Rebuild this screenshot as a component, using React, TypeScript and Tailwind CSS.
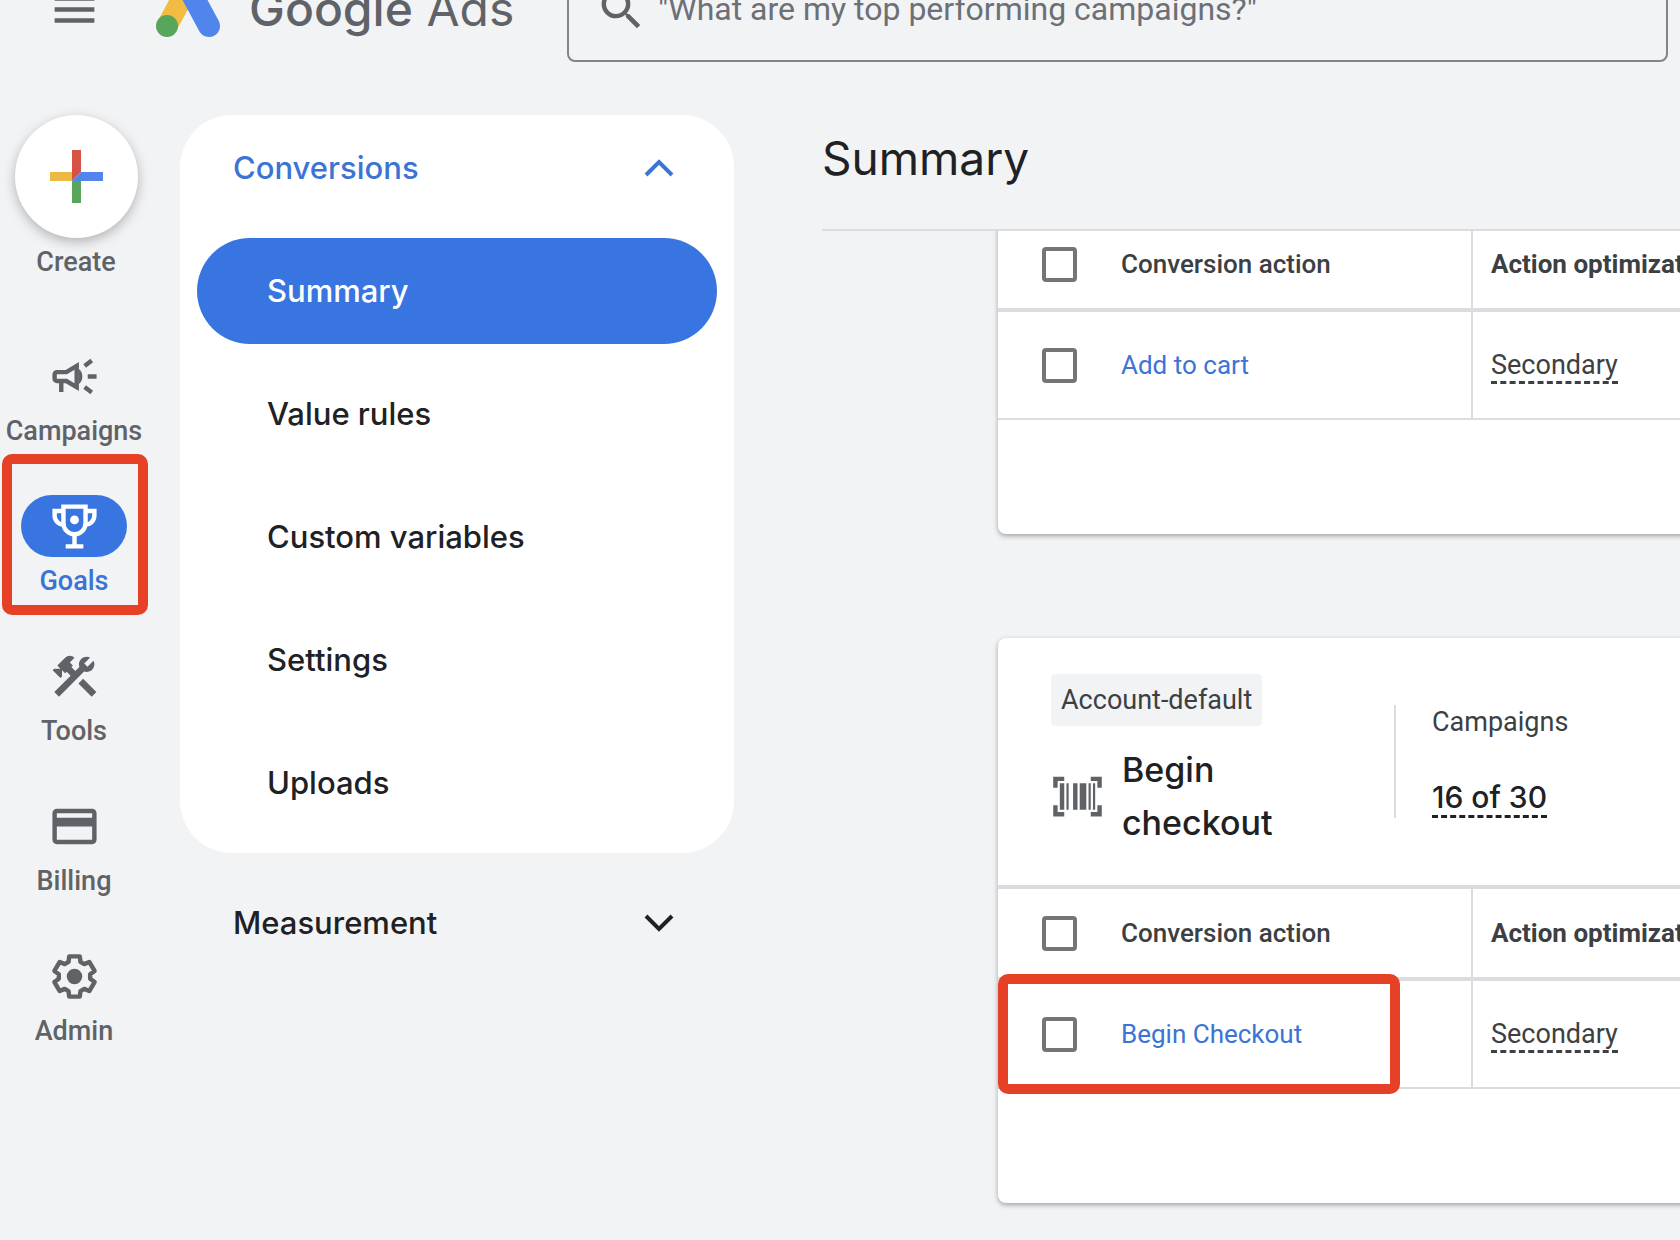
import { useState } from "react";
import type { ReactNode } from "react";
import clsx from "clsx";
import { MdConstruction, MdCreditCard, MdMenu, MdSearch } from "react-icons/md";

const AdsLogo = () => (
    <svg viewBox="0 0 66 70" className="h-[70px] w-[66px]" aria-hidden="true">
        <path d="M33 13 12 52" stroke="#f2bc42" strokeWidth="21" strokeLinecap="round" />
        <path d="M33 13 54 52" stroke="#5086ec" strokeWidth="22" strokeLinecap="round" />
        <circle cx="12" cy="52" r="11" fill="#58a55c" />
    </svg>
);

const PlusIcon = () => (
    <svg viewBox="0 0 53 53" className="size-[53px]" aria-hidden="true">
        <path d="M0 22h22v9H0z" fill="#ecb943" />
        <path d="M22 0h9v22l-9 9z" fill="#d65344" />
        <path d="M31 22h22v9H22z" fill="#5184ec" />
        <path d="M22 31h9v22h-9z" fill="#58a55c" />
    </svg>
);

const CampaignIcon = () => (
    <svg viewBox="0 0 24 24" className="size-[53px]" fill="currentColor" aria-hidden="true">
        <path d="M18 11v2h4v-2zM16 17.6l3.2 2.4 1.2-1.6-3.2-2.4zM20.4 5.6 19.2 4 16 6.4 17.2 8z" />
        <path
            fillRule="evenodd"
            d="M4 9c-1.1 0-2 .9-2 2v2c0 1.1.9 2 2 2h1v4h2v-4h1l6 3.6V5.4L8 9zm0 2h4.6L12 8.9v6.2L8.6 13H4z"
        />
        <path d="M14 8.6a4.5 4.5 0 0 1 0 6.8z" />
    </svg>
);

const TrophyIcon = () => (
    <svg viewBox="0 0 24 24" className="size-[53px]" fill="none" stroke="currentColor" strokeWidth="2" aria-hidden="true">
        <path d="M7 3v7.5a5 5 0 0 0 10 0V3z" />
        <path d="M7 5H3v2a4.2 4.2 0 0 0 4.5 4.2M17 5h4v2a4.2 4.2 0 0 1-4.5 4.2M12 15.5V21M8 21h8" />
        <circle cx="12" cy="9" r="2" fill="currentColor" stroke="none" />
    </svg>
);

const GearIcon = () => (
    <svg viewBox="0 0 24 24" className="size-[53px]" fill="none" stroke="currentColor" strokeWidth="2" strokeLinejoin="round" aria-hidden="true">
        <path d="M9.6 2.9h4.8l.3 2.5 1.7 1 2.3-1 2.4 4.1-2 1.5v2l2 1.5-2.4 4.1-2.3-1-1.7 1-.3 2.5H9.6l-.3-2.5-1.7-1-2.3 1-2.4-4.1 2-1.5v-2l-2-1.5 2.4-4.1 2.3 1 1.7-1z" />
        <circle cx="12" cy="12" r="3.5" fill="currentColor" stroke="none" />
    </svg>
);

const BarcodeIcon = () => (
    <svg viewBox="0 0 24 24" className="size-[53px] shrink-0" fill="#5f6368" aria-hidden="true">
        <path d="M1 3h5v2H3v3H1zM18 3h5v5h-2V5h-3zM1 16h2v3h3v2H1zM21 16h2v5h-5v-2h3z" />
        <path d="M4 6h2v12H4zM7 6h1v12H7zM10 6h2v12h-2zM13 6h3v12h-3zM17 6h1v12h-1zM19 6h1v12h-1z" />
    </svg>
);

const Chevron = ({ up }: { up?: boolean }) => (
    <svg viewBox="0 0 30 18" className="h-[18px] w-[30px]" fill="none" stroke="currentColor" strokeWidth="4" aria-hidden="true">
        <path d={up ? "M2 16 15 3l13 13" : "M2 2l13 13L28 2"} />
    </svg>
);

const railItems: { label: string; icon: ReactNode }[] = [
    { label: "Campaigns", icon: <CampaignIcon /> },
    { label: "Goals", icon: <TrophyIcon /> },
    { label: "Tools", icon: <MdConstruction size={53} /> },
    { label: "Billing", icon: <MdCreditCard size={53} /> },
    { label: "Admin", icon: <GearIcon /> },
];

const conversionLinks = ["Summary", "Value rules", "Custom variables", "Settings", "Uploads"];

const Header = () => (
    <header className="-mt-11 flex h-[106px] items-center pr-3">
        <button aria-label="Main menu" className="flex w-[148px] shrink-0 justify-center text-[#5f6368]">
            <MdMenu size={53} />
        </button>
        <a
            href="#"
            className="flex w-[419px] shrink-0 items-center gap-7 pl-[7px] font-['Inter'] text-[48px] whitespace-nowrap text-[#5f6368]"
        >
            <AdsLogo />
            <span>
                <span className="font-medium">Google</span> Ads
            </span>
        </a>
        <label className="flex h-full flex-1 items-center gap-[10px] rounded-lg border-2 border-[#80868b] pl-[26px] text-[#5f6368]">
            <MdSearch size={53} className="shrink-0" />
            <input
                type="search"
                aria-label="Search"
                placeholder={'"What are my top performing campaigns?"'}
                className="w-full bg-transparent text-[32px] outline-none placeholder:text-[#6c7075]"
            />
        </label>
    </header>
);

const Rail = () => {
    const [active, setActive] = useState("Goals");

    return (
        <nav className="mr-7 flex w-[152px] shrink-0 flex-col items-center text-[27px] leading-10 font-medium text-[#5f6368]">
            <button className="flex flex-col items-center gap-1">
                <span className="flex size-[123px] items-center justify-center rounded-full bg-white shadow-[0_4px_12px_rgba(60,64,67,0.35)]">
                    <PlusIcon />
                </span>
                Create
            </button>
            <div className="mt-[63px] flex w-[148px] flex-col gap-11 self-start">
                {railItems.map(({ label, icon }) => (
                    <button
                        key={label}
                        onClick={() => setActive(label)}
                        className={clsx("relative flex flex-col items-center gap-1", label === active && "text-[#3b74d4]")}
                    >
                        <span
                            className={clsx(
                                "flex h-[62px] w-[106px] items-center justify-center rounded-full",
                                label === active && "bg-[#3875e0] text-white"
                            )}
                        >
                            {icon}
                        </span>
                        {label}
                        {label === "Goals" && (
                            <span className="pointer-events-none absolute -top-[41px] right-0 -bottom-3.5 left-0.5 rounded-[10px] border-10 border-[#e64126]" />
                        )}
                    </button>
                ))}
            </div>
        </nav>
    );
};

const SideMenu = () => {
    const [current, setCurrent] = useState("Summary");

    return (
        <aside className="flex w-[554px] shrink-0 flex-col gap-[17px] font-['Inter'] text-[31px] font-medium text-[#202124]">
            <div className="flex flex-col gap-[17px] rounded-[52px] bg-white px-[17px] pb-[17px]">
                <button className="flex h-[106px] items-center justify-between pr-[43px] pl-9 text-[#3b74d4]">
                    Conversions
                    <Chevron up />
                </button>
                {conversionLinks.map((name) => (
                    <a
                        key={name}
                        href="#"
                        onClick={() => setCurrent(name)}
                        className={clsx(
                            "flex h-[106px] items-center rounded-full pl-[70px]",
                            name === current && "bg-[#3875e0] text-white"
                        )}
                    >
                        {name}
                    </a>
                ))}
            </div>
            <button className="mx-[17px] flex h-[106px] items-center justify-between pr-[43px] pl-9">
                Measurement
                <Chevron />
            </button>
        </aside>
    );
};

const Checkbox = ({ id, label }: { id: string; label?: string }) => (
    <input
        id={id}
        type="checkbox"
        aria-label={label}
        className="size-[35px] shrink-0 appearance-none rounded-[4px] border-4 border-[#757575] bg-white checked:bg-[#3875e0]"
    />
);

const ActionTable = ({ id, action, marked }: { id: string; action: string; marked?: boolean }) => (
    <table className="mb-[114px] w-full table-fixed border-separate border-spacing-0 text-left text-[26px] text-[#3c4043]">
        <thead>
            <tr className="h-[92px]">
                <th className="w-[473px] border-b-4 border-[#dadce0] p-0 font-medium">
                    <div className="flex items-center gap-11 pl-11">
                        <Checkbox id={`${id}-all`} />
                        <label htmlFor={`${id}-all`}>Conversion action</label>
                    </div>
                </th>
                <th className="border-b-4 border-l-2 border-[#dadce0] p-0 pl-[18px] font-bold whitespace-nowrap">
                    Action optimization
                </th>
            </tr>
        </thead>
        <tbody>
            <tr className="h-[108px]">
                <td className="relative border-b-2 border-[#dadce0] p-0">
                    <div className="flex items-center gap-11 pl-11">
                        <Checkbox id={`${id}-row`} label={action} />
                        <a href="#" className="text-[#3b74d4]">
                            {action}
                        </a>
                    </div>
                    {marked && (
                        <span className="pointer-events-none absolute -top-[7px] -bottom-[7px] left-0 w-[402px] rounded-[10px] border-10 border-[#e64126]" />
                    )}
                </td>
                <td className="border-b-2 border-l-2 border-[#dadce0] p-0 pl-[18px]">
                    <span className="inline-block border-b-3 border-dashed border-[#3c4043] align-middle text-[27px] leading-8">
                        Secondary
                    </span>
                </td>
            </tr>
        </tbody>
    </table>
);

const cardClass = "-mr-4 rounded-l-lg bg-white shadow-[0_2px_5px_rgba(60,64,67,0.45)]";

const Main = () => (
    <main className="ml-[88px] flex min-w-0 flex-1 flex-col">
        <div className="flex h-[116px] items-center border-b-2 border-[#dadce0] pb-7">
            <h1 className="font-['Inter'] text-[46px] text-[#202124]">Summary</h1>
        </div>
        <div className="flex flex-col gap-[104px] overflow-hidden pb-9 pl-44">
            <section className={clsx(cardClass, "-mt-[11px]")}>
                <ActionTable id="cart" action="Add to cart" />
            </section>
            <section className={cardClass}>
                <div className="flex border-b-4 border-[#dadce0] py-9 pl-[53px] text-[#3c4043]">
                    <div className="flex w-[343px] shrink-0 flex-col items-start gap-[17px]">
                        <span className="rounded-[4px] bg-[#f1f3f4] px-[10px] text-[27px] leading-[52px]">Account-default</span>
                        <div className="flex items-center gap-[18px]">
                            <BarcodeIcon />
                            <h2 className="w-[200px] font-['Inter'] text-[34px] leading-[53px] font-medium text-[#202124]">
                                Begin checkout
                            </h2>
                        </div>
                    </div>
                    <div className="flex flex-col items-start gap-10 self-center border-l-2 border-[#dadce0] pl-9">
                        <span className="text-[27px] leading-[34px]">Campaigns</span>
                        <a
                            href="#"
                            className="border-b-3 border-dashed border-[#202124] font-['Inter'] text-[30px] leading-9 font-medium text-[#202124]"
                        >
                            16 of 30
                        </a>
                    </div>
                </div>
                <ActionTable id="checkout" action="Begin Checkout" marked />
            </section>
        </div>
    </main>
);

const App = () => (
    <div className="flex min-h-screen flex-col gap-[53px] overflow-hidden bg-[#f2f3f5] font-['Roboto',sans-serif]">
        <Header />
        <div className="flex">
            <Rail />
            <SideMenu />
            <Main />
        </div>
    </div>
);

export default App;
